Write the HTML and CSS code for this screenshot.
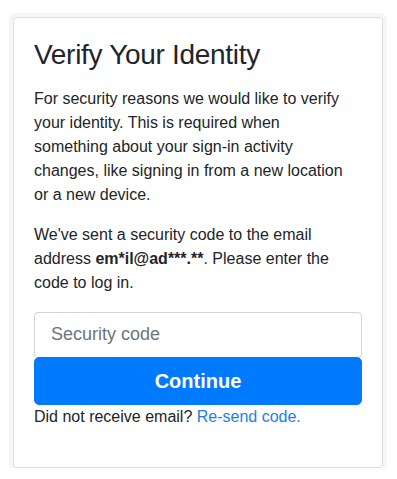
FILE: index.html
```html
<!DOCTYPE html>
<html lang="en">
<head>
<meta charset="utf-8">
<title>Verify Your Identity</title>
<link rel="stylesheet" href="styles.css">
</head>
<body>
  <div class="page">
    <div class="card">
      <h3 class="card-title">Verify Your Identity</h3>
      <p class="text">For security reasons we would like to verify<br>
        your identity. This is required when<br>
        something about your sign-in activity<br>
        changes, like signing in from a new location<br>
        or a new device.</p>
      <p class="text">We've sent a security code to the email<br>
        address <strong>em*il@ad***.**</strong>. Please enter the<br>
        code to log in.</p>
      <form class="form">
        <input class="code-input" type="text" placeholder="Security code">
        <button class="btn" type="button">Continue</button>
      </form>
      <p class="text resend">Did not receive email? <a class="link" href="#">Re-send code.</a></p>
    </div>
  </div>
</body>
</html>
```

FILE: styles.css
```css
* { box-sizing: border-box; }

html, body {
  margin: 0;
  padding: 0;
  background: #ffffff;
}

body {
  font-family: "Liberation Sans", Arial, Helvetica, sans-serif;
  color: #212529;
  font-size: 16px;
  line-height: 1.5;
}

.page {
  padding: 17px 14px 0 13px;
}

.card {
  width: 370px;
  border: 1px solid rgba(0, 0, 0, 0.125);
  border-radius: 4px;
  padding: 20px 20px 22px 20px;
  background: #fff;
  box-shadow: 0 0 0 4px #f5f5f5;
}

.card-title {
  margin: 0 0 15px 0;
  font-size: 28px;
  font-weight: 400;
  line-height: 1.2;
  letter-spacing: -0.3px;
}

.text {
  margin: 0 0 16px 0;
  white-space: nowrap;
}

.form {
  display: flex;
  flex-direction: column;
  margin-top: 17px;
}

.code-input {
  display: block;
  width: 100%;
  height: 46px;
  padding: 8px 16px;
  font-family: inherit;
  font-size: 18px;
  line-height: 1.5;
  color: #495057;
  background: #fff;
  border: 1px solid #ced4da;
  border-radius: 4px;
  outline: none;
}

.code-input::placeholder {
  color: #6c757d;
  opacity: 1;
}

.btn {
  display: block;
  width: 100%;
  height: 48px;
  margin-top: -1px;
  padding: 8px 16px;
  font-family: inherit;
  font-size: 20px;
  font-weight: 700;
  line-height: 1.5;
  color: #fff;
  background: #007bff;
  border: 1px solid #007bff;
  border-radius: 5px;
  cursor: pointer;
}

.resend {
  margin-top: 0;
}

.link {
  color: #1a7ef0;
  text-decoration: none;
}
```
